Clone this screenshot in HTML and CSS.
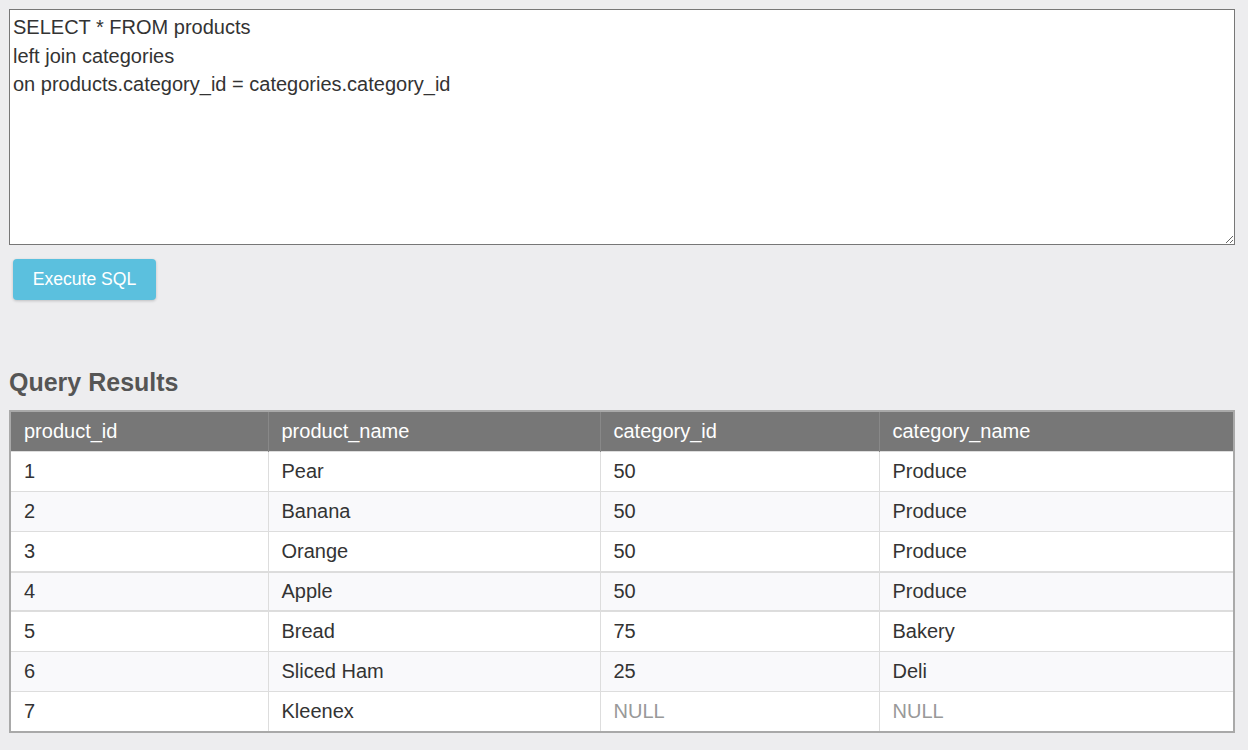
FILE: index.html
```html
<!DOCTYPE html>
<html>
<head>
<meta charset="utf-8">
<link rel="stylesheet" href="styles.css">
</head>
<body>
<div class="page">
<textarea class="sql" spellcheck="false">SELECT * FROM products
left join categories
on products.category_id = categories.category_id</textarea>
<div class="actions"><button class="btn-exec">Execute SQL</button></div>
<h2 class="results-title">Query Results</h2>
<table class="results">
<colgroup><col class="c1"><col class="c2"><col class="c3"><col class="c4"></colgroup>
<thead>
<tr><th>product_id</th><th>product_name</th><th>category_id</th><th>category_name</th></tr>
</thead>
<tbody>
<tr><td>1</td><td>Pear</td><td>50</td><td>Produce</td></tr>
<tr><td>2</td><td>Banana</td><td>50</td><td>Produce</td></tr>
<tr><td>3</td><td>Orange</td><td>50</td><td>Produce</td></tr>
<tr class="marked"><td>4</td><td>Apple</td><td>50</td><td>Produce</td></tr>
<tr><td>5</td><td>Bread</td><td>75</td><td>Bakery</td></tr>
<tr><td>6</td><td>Sliced Ham</td><td>25</td><td>Deli</td></tr>
<tr><td>7</td><td>Kleenex</td><td class="null">NULL</td><td class="null">NULL</td></tr>
</tbody>
</table>
</div>
</body>
</html>
```
FILE: styles.css
```css
html, body {
  margin: 0;
  padding: 0;
  background: #ededef;
}
body {
  font-family: "Liberation Sans", Arial, sans-serif;
  color: #333;
}
.page {
  padding: 9px 13px 0 9px;
}
.sql {
  display: block;
  box-sizing: border-box;
  width: 1226px;
  height: 236px;
  margin: 0;
  padding: 3px 3px;
  border: 1px solid #777;
  background: #fff;
  color: #333;
  font-family: "Liberation Sans", Arial, sans-serif;
  font-size: 20px;
  line-height: 28.6px;
  outline: none;
}
.actions {
  padding: 14px 0 0 4px;
}
.btn-exec {
  display: block;
  height: 41px;
  width: 143px;
  padding: 0;
  border: none;
  border-radius: 4px;
  background: #5bc0de;
  color: #fff;
  font-family: "Liberation Sans", Arial, sans-serif;
  font-size: 17.6px;
  box-shadow: 0 1px 3px rgba(0,0,0,0.2);
}
.results-title {
  margin: 67px 0 13px 0;
  font-size: 25px;
  line-height: 30px;
  font-weight: bold;
  color: #555;
}
.results {
  width: 1226px;
  border-collapse: collapse;
  border: 2px solid #a9a9a9;
  background: #fff;
  font-size: 20px;
}
.c1 { width: 258px; }
.c2 { width: 332px; }
.c3 { width: 279px; }
.results th {
  background: #777;
  color: #fff;
  font-weight: normal;
  text-align: left;
  height: 39px;
  padding: 0 13px;
  border-left: 1px solid #888;
}
.results td {
  height: 39px;
  padding: 0 13px;
  border: 1px solid #ddd;
}
.results tbody tr:nth-child(even) td {
  background: #f9f9fb;
}
.results tr.marked td {
  box-shadow: inset 0 1px 0 #dcdcdc, inset 0 -1px 0 #dcdcdc;
}
.results td.null {
  color: #999;
}
```
